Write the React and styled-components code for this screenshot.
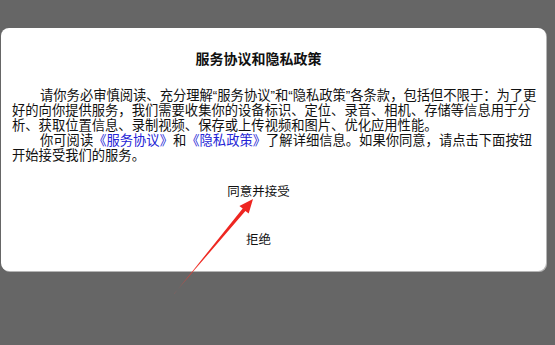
import React from 'react';
import styled, { createGlobalStyle } from 'styled-components';

const GlobalStyle = createGlobalStyle`
  html, body {
    margin: 0;
    padding: 0;
    background: #666666;
  }
  body {
    font-family: "Liberation Sans", "Noto Sans CJK SC", sans-serif;
  }
`;

const Screen = styled.div`
  position: relative;
  width: 555px;
  height: 345px;
  padding: 28px 0 0 1px;
  box-sizing: border-box;
  background: #666666;
  overflow: hidden;
`;

const Dialog = styled.div`
  width: 545px;
  height: 243px;
  box-sizing: border-box;
  background: #ffffff;
  border-radius: 8px;
  box-shadow: 1px 1px 0 #b5b5b5;
  padding-top: 21px;
  display: flex;
  flex-direction: column;
  color: #111111;
`;

const Title = styled.h1`
  margin: 0 30px 0 0;
  font-size: 14px;
  line-height: 20px;
  font-weight: bold;
  text-align: center;
`;

const Body = styled.div`
  margin-top: 19px;
  padding: 0 4px 0 11px;
  font-size: 13.3px;
  line-height: 15px;
`;

const Para = styled.p`
  margin: 0;
  text-indent: 28px;
`;

const Link = styled.span`
  color: #2424d6;
`;

const Actions = styled.div`
  margin: 19px 30px 0 0;
  display: flex;
  flex-direction: column;
  align-items: center;
  gap: 28px;
`;

const ActionButton = styled.button`
  border: none;
  background: none;
  padding: 0;
  font-family: inherit;
  font-size: 12.5px;
  line-height: 20px;
  color: #111111;
  cursor: pointer;
`;

const Arrow = styled.svg`
  position: absolute;
  left: 0;
  top: 0;
  pointer-events: none;
`;

function PointerArrow() {
  return (
    <Arrow width="555" height="345" viewBox="0 0 555 345">
      <defs>
        <linearGradient id="arrowFade" x1="174" y1="294" x2="253" y2="199" gradientUnits="userSpaceOnUse">
          <stop offset="0" stopColor="#f04a40" stopOpacity="0.6" />
          <stop offset="0.35" stopColor="#ee2a22" />
          <stop offset="1" stopColor="#ee2420" />
        </linearGradient>
      </defs>
      <polygon
        points="173.6,294.3 245.4,210.9 248.7,213.6 253,199 239.4,205.9 242.7,208.6 174.3,293.7"
        fill="url(#arrowFade)"
      />
    </Arrow>
  );
}

export default function App() {
  return (
    <>
      <GlobalStyle />
      <Screen>
        <Dialog>
          <Title>服务协议和隐私政策</Title>
          <Body>
            <Para>
              请你务必审慎阅读、充分理解“服务协议”和“隐私政策”各条款，包括但不限于：为了更好的向你提供服务，我们需要收集你的设备标识、定位、录音、相机、存储等信息用于分析、获取位置信息、录制视频、保存或上传视频和图片、优化应用性能。
            </Para>
            <Para>
              你可阅读<Link>《服务协议》</Link>和<Link>《隐私政策》</Link>了解详细信息。如果你同意，请点击下面按钮开始接受我们的服务。
            </Para>
          </Body>
          <Actions>
            <ActionButton>同意并接受</ActionButton>
            <ActionButton>拒绝</ActionButton>
          </Actions>
        </Dialog>
        <PointerArrow />
      </Screen>
    </>
  );
}
